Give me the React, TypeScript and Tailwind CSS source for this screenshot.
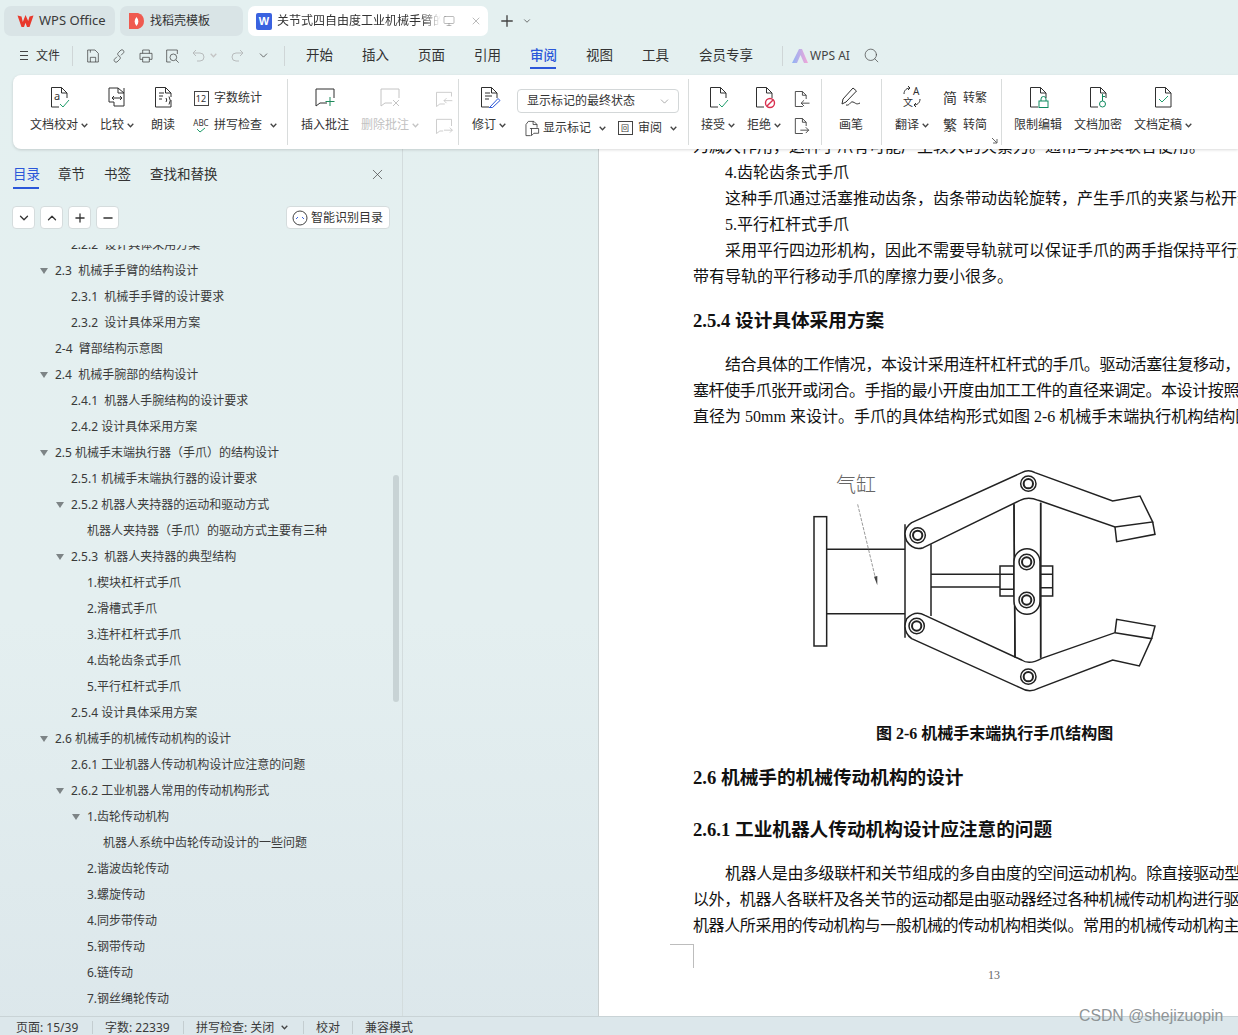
import React from "react";
import { X, Plus, ChevronDown, ChevronUp, Minus, Search, Monitor } from "lucide-react";

const Caret = ({ gray = false }: { gray?: boolean }) => (
  <svg width="7" height="5" viewBox="0 0 7 5" className="ml-[3px] shrink-0" fill="none" stroke={gray ? "#c4c4c4" : "#444"} strokeWidth="1.3">
    <path d="M.7 .8 3.5 3.8 6.3 .8" />
  </svg>
);

const Ic = ({ children, s = 24, vb = 24 }: { children: React.ReactNode; s?: number; vb?: number }) => (
  <svg width={s} height={s} viewBox={`0 0 ${vb} ${vb}`} fill="none" stroke="#2f2f2f" strokeWidth="1" className="shrink-0">
    {children}
  </svg>
);

const Doc = ({ children, open = false }: { children?: React.ReactNode; open?: boolean }) => (
  <Ic>
    <path d={open ? "M12 22H4.500V2.500H14.500L20 8V13" : "M20 15V22H4.500V2.500H14.500L20 8V12"} />
    <path d="M14.500 2.500V8H20" />
    {children}
  </Ic>
);

const Big = ({ label, w, icon, caret, gray }: { label: string; w: number; icon: React.ReactNode; caret?: boolean; gray?: boolean }) => (
  <div className="flex flex-col items-center shrink-0" style={{ width: w }}>
    <div className="h-[24px] flex items-center justify-center">{icon}</div>
    <div className={`mt-[7px] h-[18px] flex items-center text-[12px] whitespace-nowrap ${gray ? "text-[#c2c2c2]" : "text-[#333]"}`}>
      {label}
      {caret && <Caret gray={gray} />}
    </div>
  </div>
);

const Small = ({ icon, label, caret, gap = 5 }: { icon: React.ReactNode; label: string; caret?: boolean; gap?: number }) => (
  <div className="h-[18px] flex items-center text-[12px] text-[#333] whitespace-nowrap">
    <span className="w-[16px] h-[18px] flex items-center justify-center">{icon}</span>
    <span style={{ marginLeft: gap }}>{label}</span>
    {caret && <span className="ml-[5px]"><Caret /></span>}
  </div>
);

const Group = ({ w, children, cls = "" }: { w: number; children: React.ReactNode; cls?: string }) => (
  <div className="h-[66px] flex shrink-0 border-r border-[#d9dcdc]" style={{ width: w }}>
    <div className={`flex h-full pt-[6px] ${cls}`}>{children}</div>
  </div>
);

const MiniDoc = ({ dir }: { dir: "l" | "r" }) => (
  <Ic s={20}>
    <path d="M13 21H4V3H12.500L17 7.500V12" />
    <path d="M12.500 3V7.500H17" />
    {dir === "l" ? <path d="M21 17H11M14.500 13.500 11 17l3.500 3.500" /> : <path d="M10 17H20M16.500 13.500 20 17l-3.500 3.500" />}
  </Ic>
);

const Comment = ({ gray, children }: { gray?: boolean; children?: React.ReactNode }) => (
  <svg width="24" height="24" viewBox="0 0 24 24" fill="none" stroke={gray ? "#c4c4c4" : "#2f2f2f"} strokeWidth="1" className="shrink-0">
    <path d="M14 18H7L3 21V4H21V13" />
    {children}
  </svg>
);

const tree: [number, string, boolean][] = [
  [2, "2.2.2  设计具体采用方案", false],
  [1, "2.3  机械手手臂的结构设计", true],
  [2, "2.3.1  机械手手臂的设计要求", false],
  [2, "2.3.2  设计具体采用方案", false],
  [1, "2-4  臂部结构示意图", false],
  [1, "2.4  机械手腕部的结构设计", true],
  [2, "2.4.1  机器人手腕结构的设计要求", false],
  [2, "2.4.2 设计具体采用方案", false],
  [1, "2.5 机械手末端执行器（手爪）的结构设计", true],
  [2, "2.5.1 机械手末端执行器的设计要求", false],
  [2, "2.5.2 机器人夹持器的运动和驱动方式", true],
  [3, "机器人夹持器（手爪）的驱动方式主要有三种", false],
  [2, "2.5.3  机器人夹持器的典型结构", true],
  [3, "1.楔块杠杆式手爪", false],
  [3, "2.滑槽式手爪", false],
  [3, "3.连杆杠杆式手爪", false],
  [3, "4.齿轮齿条式手爪", false],
  [3, "5.平行杠杆式手爪", false],
  [2, "2.5.4 设计具体采用方案", false],
  [1, "2.6 机械手的机械传动机构的设计", true],
  [2, "2.6.1 工业机器人传动机构设计应注意的问题", false],
  [2, "2.6.2 工业机器人常用的传动机构形式", true],
  [3, "1.齿轮传动机构", true],
  [4, "机器人系统中齿轮传动设计的一些问题", false],
  [3, "2.谐波齿轮传动", false],
  [3, "3.螺旋传动", false],
  [3, "4.同步带传动", false],
  [3, "5.钢带传动", false],
  [3, "6.链传动", false],
  [3, "7.钢丝绳轮传动", false],
];

const SqBtn = ({ children }: { children: React.ReactNode }) => (
  <div className="w-[23px] h-[23px] bg-white border border-[#d5dcdd] rounded-[4px] flex items-center justify-center text-[#333]">{children}</div>
);

const P = ({ children, indent, tight }: { children: React.ReactNode; indent?: boolean; tight?: boolean }) => (
  <div className={`h-[26px] leading-[26px] text-[16px] text-[#111] whitespace-pre ${indent ? "pl-[32px]" : ""} ${tight ? "tracking-[-0.4px]" : ""}`}>{children}</div>
);

const H = ({ children, mt }: { children: React.ReactNode; mt: string }) => (
  <div className={`h-[26px] leading-[26px] text-[18.67px] font-bold text-[#111] whitespace-pre ${mt}`}>{children}</div>
);

const Gripper = () => (
  <svg width="380" height="245" viewBox="0 0 1140 735" fill="none" stroke="#222" strokeWidth="4.5" className="block">
    <rect x="72" y="182" width="38" height="388" />
    <path d="M110 280H345M110 473H345" />
    <text x="138" y="108" fontSize="60" fill="#666" stroke="none" fontFamily="'Noto Sans CJK SC',sans-serif" fontWeight="300">气缸</text>
    <path d="M203 145 256 365" stroke="#666" strokeWidth="2" strokeDasharray="10 4" />
    <path d="M252 362 262 360 262 388Z" fill="#444" stroke="none" />
    <path d="M345 205V545M423 265V480" />
    <path d="M423 355H630M423 393H630" />
    <path d="M672 145 675 605M752 140V605" />
    <rect x="630" y="330" width="42" height="90" />
    <path d="M630 355H672M630 400H672" />
    <rect x="750" y="330" width="38" height="90" />
    <path d="M750 355H788M750 395H788" />
    <path d="M365 200 695 50Q715 38 735 50L968 135 1050 120 1088 198 975 213 745 133Q715 120 690 133L400 275Q370 285 350 255 335 220 365 200Z" fill="#fff" />
    <path d="M1088 198 1095 235 980 257 975 213" />
    <path d="M365 548 690 695Q718 712 745 697L968 612 1048 630 1085 548 975 530 755 607Q718 628 695 612L405 478Q375 462 350 488 335 525 365 548Z" fill="#fff" />
    <path d="M1085 548 1095 510 980 490 975 530" />
    <path d="M672 145 675 605M752 140V605" />
    <rect x="672" y="278" width="78" height="197" rx="39" fill="#fff" />
    {[[710, 318], [710, 432], [383, 238], [380, 510], [715, 83], [715, 662]].map(([x, y]) => (
      <g key={`${x}-${y}`}>
        <circle cx={x} cy={y} r="23" fill="#fff" />
        <circle cx={x} cy={y} r="14" strokeWidth="6" />
      </g>
    ))}
  </svg>
);

export default function App() {
  return (
    <div className="relative w-[1238px] h-[1035px] overflow-hidden flex flex-col bg-[linear-gradient(180deg,#e4f0f0_0%,#e4eff0_60%,#dce7eb_100%)] font-['Noto_Sans','Noto_Sans_CJK_SC',sans-serif] text-[#333]">
      {/* tab bar */}
      <div className="h-[30px] mt-[6px] pl-[4px] flex items-stretch shrink-0">
        <div className="w-[111px] rounded-[7px] bg-[#d9e4e6] flex items-center pl-[13px]">
          <svg width="17" height="14" viewBox="0 0 17 14"><path d="M.5 1.500 4.500 13H7L8.500 8.800 10 13h2.500l4-11.500-4 .9-1.300 4.600L8.500 1 5.800 8 4.500 2.400Z" fill="#e8392c" /></svg>
          <span className="ml-[5px] text-[13px] text-[#3a3a3a]">WPS Office</span>
        </div>
        <div className="ml-[5px] w-[123px] rounded-[7px] bg-[#d9e4e6] flex items-center pl-[9px]">
          <svg width="15" height="16" viewBox="0 0 15 16"><path d="M0 0H9Q15 2 15 8T9 16H0Z" fill="#ef5a50" /><path d="M7.500 4C5 7 5 10 7.500 13 10 10 10 7 7.500 4Z" fill="#fff" /></svg>
          <span className="ml-[6px] text-[12px] text-[#333]">找稻壳模板</span>
        </div>
        <div className="ml-[5px] w-[240px] rounded-[7px] bg-white flex items-center pl-[8px]">
          <div className="w-[16px] h-[17px] rounded-[2px] bg-[#3a62e0] flex items-center justify-center text-white text-[11px] font-bold font-['Liberation_Sans']">W</div>
          <span className="ml-[5px] w-[164px] overflow-hidden whitespace-nowrap text-[12px] text-[#333] [mask-image:linear-gradient(90deg,#000_88%,transparent)]">关节式四自由度工业机械手臂的设计</span>
          <Monitor size={12} strokeWidth={1} className="ml-[2px] text-[#777]" />
          <X size={12} strokeWidth={1} className="ml-[15px] text-[#777]" />
        </div>
        <Plus size={18} strokeWidth={1.8} className="ml-[10px] self-center text-[#444]" />
        <ChevronDown size={10} strokeWidth={1.8} className="ml-[6px] self-center text-[#444]" />
      </div>

      {/* menu row */}
      <div className="h-[39px] flex items-center shrink-0 text-[13.5px] text-[#333]">
        <div className="ml-[20px] w-[8px] flex flex-col gap-[3px]"><i className="block h-px w-full bg-[#444]" /><i className="block h-px w-full bg-[#444]" /><i className="block h-px w-full bg-[#444]" /></div>
        <span className="ml-[8px] text-[12px]">文件</span>
        <i className="ml-[12px] w-px h-[20px] bg-[#cfd6d7]" />
        <span className="ml-[12px]"><Ic s={16}><path d="M4 3H15L20 8V21H4ZM8 21V14H16V21M8 3V7" /></Ic></span>
        <span className="ml-[10px]"><Ic s={16}><path d="M9 13 5 17a3 3 0 0 0 4 4l4-4a3 3 0 0 0-1-5M15 11l4-4a3 3 0 0 0-4-4l-4 4a3 3 0 0 0 1 5" /></Ic></span>
        <span className="ml-[11px]"><Ic s={16}><path d="M7 8V3H17V8M7 17H3V8H21V17H17M7 14H17V21H7Z" /></Ic></span>
        <span className="ml-[10px]"><Ic s={16}><path d="M20 9V3H4V21H10" /><circle cx="14" cy="14" r="5" /><path d="M18 18 22 22" /></Ic></span>
        <span className="ml-[12px]"><svg width="14" height="16" viewBox="0 0 14 16" fill="none" stroke="#b8bcbd"><path d="M4 2 1 5 4 8M1 5H8A4 4 0 0 1 8 13H5" /></svg></span>
        <span className="ml-[1px]"><Caret gray /></span>
        <span className="ml-[13px]"><svg width="14" height="16" viewBox="0 0 14 16" fill="none" stroke="#b8bcbd"><path d="M10 2 13 5 10 8M13 5H6A4 4 0 0 0 6 13H9" /></svg></span>
        <ChevronDown size={13} strokeWidth={1.4} className="ml-[13px] text-[#444]" />
        <i className="ml-[14px] w-px h-[20px] bg-[#cfd6d7]" />
        <div className="ml-[21px] flex w-[482px] items-center">
          {["开始", "插入", "页面", "引用", "审阅", "视图", "工具"].map((m) => (
            <span key={m} className={`relative w-[56px] ${m === "审阅" ? "text-[#2b57d9] font-medium" : ""}`}>
              {m}
              {m === "审阅" && <i className="absolute left-0 w-[26px] top-[22px] h-[2px] bg-[#2b57d9]" />}
            </span>
          ))}
          <span className="ml-[1px] whitespace-nowrap">会员专享</span>
        </div>
        <i className="ml-[-6px] w-px h-[20px] bg-[#cfd6d7]" />
        <svg width="16" height="14" viewBox="0 0 16 14" className="ml-[9px]"><defs><linearGradient id="ai" x1="0" x2="1"><stop offset="0" stopColor="#8fb4f5" /><stop offset="1" stopColor="#f3a6d8" /></linearGradient></defs><path d="M0 14 7 0H10L16 14H12L8.500 6 5 14Z" fill="url(#ai)" /></svg>
        <span className="ml-[2px] text-[12px] text-[#444]">WPS AI</span>
        <Search size={17} strokeWidth={1} className="ml-[13px] text-[#444]" />
      </div>

      {/* ribbon */}
      <div className="h-[74px] ml-[13px] shrink-0 bg-white rounded-l-[8px] flex items-center shadow-[0_1px_3px_rgba(0,0,0,0.15)] relative z-10">
        <Group w={275} cls="pl-[17px]">
          <Big label="文档校对" w={58} caret icon={<Doc open><text x="7" y="15" fontSize="11" fill="#333" stroke="none">a</text><path d="M13 19 16 22 22 15" stroke="#1f9d6b" /></Doc>} />
          <div className="w-[12px]" />
          <Big label="比较" w={34} caret icon={<Ic><path d="M4 3H13L19 8V3M19 8V21H10M4 3V17H9V21H10" /><path d="M13 3V8H19" /><path d="M7 13H17M9 11 7 13 9 15M15 11 17 13 15 15" /></Ic>} />
          <div className="w-[17px]" />
          <Big label="朗读" w={24} icon={<Doc><path d="M8 8H13M8 11H12M8 14H11" /><path d="M15 13q1.500 2 0 4M18 11.500q2.500 4 0 8" /></Doc>} />
          <div className="w-[18px]" />
          <div className="flex flex-col gap-[9px] pt-[4px]">
            <Small icon={<span className="w-[15px] h-[15px] border border-[#444] text-[9px] leading-[13px] text-center text-[#333]">12</span>} label="字数统计" />
            <Small icon={<span className="text-[8px] leading-[9px] text-center text-[#333]">ABC<svg width="12" height="6" viewBox="0 0 12 6" fill="none" stroke="#1f9d6b" className="mx-auto"><path d="M2 2 5 5 10 1" /></svg></span>} label="拼写检查" caret />
          </div>
        </Group>
        <Group w={171} cls="pl-[13px]">
          <Big label="插入批注" w={48} icon={<Comment><path d="M17 12V21M12.500 16.500H21.500" stroke="#1f8a5c" /></Comment>} />
          <div className="w-[12px]" />
          <Big label="删除批注" w={58} caret gray icon={<Comment gray><path d="M15 15 21 21M21 15 15 21" /></Comment>} />
          <div className="w-[15px]" />
          <div className="flex flex-col gap-[7px] pt-[4px]">
            <svg width="20" height="20" viewBox="0 0 24 24" fill="none" stroke="#c4c4c4"><path d="M13 18H7L3 21V4H21V9M22 14H12M15 11 12 14 15 17" /></svg>
            <svg width="20" height="20" viewBox="0 0 24 24" fill="none" stroke="#c4c4c4"><path d="M11 18H7L3 21V4H21V12M12 17H22M19 14 22 17 19 20" /></svg>
          </div>
        </Group>
        <Group w={230} cls="pl-[13px]">
          <Big label="修订" w={34} caret icon={<Doc open><path d="M8 8H13M8 11H15M8 14H12" /><path d="M13 22 21 13.500 23 15.500 15.500 22.500H12" stroke="#2b57d9" /></Doc>} />
          <div className="ml-[11px] w-[162px] mt-[4px]">
            <div className="h-[24px] border border-[#d3d7d8] rounded-[4px] flex items-center justify-between pl-[9px] pr-[7px] text-[12px]">
              显示标记的最终状态
              <ChevronDown size={13} strokeWidth={1} className="text-[#666]" />
            </div>
            <div className="mt-[6px] flex items-center pl-[6px]">
              <Small gap={4} icon={<Ic s={19}><path d="M8 3H15L19 7V11M14 3V7H19M5 7 8 3M5 7V21H11M10 12H21V18H15L12 21V12" /></Ic>} label="显示标记" caret />
              <span className="ml-[11px]"><Small gap={5} icon={<span className="block w-[15px] h-[14px] border border-[#444] text-[8px] leading-[12px] text-center">回</span>} label="审阅" caret /></span>
            </div>
          </div>
        </Group>
        <Group w={133} cls="pl-[12px]">
          <Big label="接受" w={34} caret icon={<Doc open><path d="M13 19 16 22 22 15" stroke="#1f9d6b" /></Doc>} />
          <div className="w-[12px]" />
          <Big label="拒绝" w={34} caret icon={<Doc open><circle cx="18" cy="18" r="4.500" stroke="#d9304f" strokeWidth="1.400" /><path d="M15 21 21 15" stroke="#d9304f" strokeWidth="1.400" /></Doc>} />
          <div className="w-[11px]" />
          <div className="flex flex-col gap-[7px] pt-[4px]"><MiniDoc dir="l" /><MiniDoc dir="r" /></div>
        </Group>
        <Group w={60} cls="pl-[17px]">
          <Big label="画笔" w={24} icon={<Ic><path d="M3 19 4 14 14 3 17.500 6 7 17ZM7 20C11 21 11 16 14 17S17 20 21 18" /></Ic>} />
        </Group>
        <Group w={120} cls="pl-[13px]">
          <Big label="翻译" w={34} caret icon={<Ic><text x="13" y="10" fontSize="10" fill="#333" stroke="none">A</text><text x="3" y="21" fontSize="10" fill="#333" stroke="none">文</text><path d="M4 9C4 5 7 3 10 3M8 1 10 3 8 5M20 14C20 18 17 20 14 20M16 18 14 20 16 22" /></Ic>} />
          <div className="w-[13px]" />
          <div className="flex flex-col gap-[9px] pt-[4px]">
            <Small icon={<span className="text-[14px] leading-none">简</span>} label="转繁" />
            <Small icon={<span className="text-[14px] leading-none">繁</span>} label="转简" />
          </div>
        </Group>
        <div className="h-[66px] flex pt-[6px] pl-[12px] relative">
          <Big label="限制编辑" w={48} icon={<Doc open><rect x="13" y="16" width="9" height="6.500" stroke="#0f8a5f" /><path d="M15 16v-2a2.500 2.500 0 0 1 5 0v2" stroke="#0f8a5f" /></Doc>} />
          <div className="w-[12px]" />
          <Big label="文档加密" w={48} icon={<Doc open><circle cx="16.500" cy="19" r="3" stroke="#0f8a5f" /><path d="M16.500 16V9M16.500 11.500H19" stroke="#0f8a5f" /></Doc>} />
          <div className="w-[12px]" />
          <Big label="文档定稿" w={58} caret icon={<Ic><path d="M4.500 2.500H14.500L20 8V22H4.500Z" /><path d="M14.500 2.500V8H20" /><path d="M8 14 11 17 17 11" stroke="#1f9d6b" /></Ic>} />
          <svg width="7" height="7" viewBox="0 0 7 7" fill="none" stroke="#666" className="absolute -left-[11px] bottom-[1px]"><path d="M1 1 6 6M6 2V6H2" /></svg>
        </div>
      </div>

      {/* main */}
      <div className="flex-1 flex min-h-0">
        <aside className="relative w-[403px] shrink-0 border-r border-[#d3dcdd] flex flex-col">
          <div className="h-[40px] mt-[5px] flex pl-[13px] items-center text-[13.5px] shrink-0">
            <span className="relative text-[#2b57d9] w-[45px]">目录<i className="absolute left-0 top-[23px] w-[26px] h-[2px] bg-[#2b57d9]" /></span>
            <span className="w-[46px]">章节</span>
            <span className="w-[46px]">书签</span>
            <span>查找和替换</span>
            <X size={17} strokeWidth={1} className="ml-auto mr-[16px] text-[#444]" />
          </div>
          <div className="h-[23px] mt-[12px] flex items-center pl-[12px] pr-[12px] shrink-0">
            <div className="flex gap-[5px]">
              <SqBtn><ChevronDown size={14} strokeWidth={2.2} /></SqBtn>
              <SqBtn><ChevronUp size={14} strokeWidth={2.2} /></SqBtn>
              <SqBtn><Plus size={14} strokeWidth={2.2} /></SqBtn>
              <SqBtn><Minus size={14} strokeWidth={2.2} /></SqBtn>
            </div>
            <div className="ml-auto w-[104px] h-[23px] bg-white border border-[#d5dcdd] rounded-[4px] flex items-center pl-[5px] text-[12px] text-[#333]">
              <svg width="16" height="16" viewBox="0 0 16 16" fill="none"><circle cx="8" cy="8" r="7" stroke="#444" /><path d="M4 9 6 7M10 7 12 9" stroke="#3a62e0" /></svg>
              <span className="ml-[3px]">智能识别目录</span>
            </div>
          </div>
          <div className="mt-[16px] flex-1 min-h-0 overflow-hidden text-[12px] text-[#3a3a3a]">
            <div className="-mt-[13px]">
              {tree.map(([lvl, text, tri], i) => (
                <div key={i} className="h-[26px] leading-[26px] whitespace-pre relative" style={{ paddingLeft: 39 + lvl * 16 }}>
                  {tri && <i className="absolute top-[10px] border-x-[4px] border-x-transparent border-t-[6px] border-t-[#7d8486]" style={{ left: 24 + lvl * 16 }} />}
                  {text}
                </div>
              ))}
            </div>
          </div>
          <div className="absolute left-[393px] top-[326px] w-[6px] h-[227px] rounded-full bg-[#c8d3d5]" />
        </aside>
        <div className="w-[195px] shrink-0" />
        <main className="flex-1 min-w-0 bg-white border-l border-[#c9cfd0] overflow-hidden font-['Liberation_Serif','Noto_Sans_CJK_SC',serif]">
          <div className="-mt-[15px] pl-[94px] w-[700px]">
            <P>为减大作用，这种手爪有可能产生较大的夹紧力。通常与弹簧联合使用。</P>
            <P indent>4.齿轮齿条式手爪</P>
            <P indent>这种手爪通过活塞推动齿条，齿条带动齿轮旋转，产生手爪的夹紧与松开动作。</P>
            <P indent>5.平行杠杆式手爪</P>
            <P indent>采用平行四边形机构，因此不需要导轨就可以保证手爪的两手指保持平行运动，</P>
            <P>带有导轨的平行移动手爪的摩擦力要小很多。</P>
            <H mt="mt-[18px]">2.5.4 设计具体采用方案</H>
            <div className="mt-[18px]">
              <P indent tight>结合具体的工作情况，本设计采用连杆杠杆式的手爪。驱动活塞往复移动，通过活</P>
              <P tight>塞杆使手爪张开或闭合。手指的最小开度由加工工件的直径来调定。本设计按照工件</P>
              <P>直径为 50mm 来设计。手爪的具体结构形式如图 2-6 机械手末端执行机构结构图</P>
            </div>
            <div className="mt-[26px] ml-[97px]"><Gripper /></div>
            <div className="mt-[20px] h-[26px] leading-[26px] text-[16px] font-bold text-[#111] pl-[183px] whitespace-pre">图 2-6 机械手末端执行手爪结构图</div>
            <H mt="mt-[18px]">2.6 机械手的机械传动机构的设计</H>
            <H mt="mt-[26px]">2.6.1 工业机器人传动机构设计应注意的问题</H>
            <div className="mt-[18px]">
              <P indent tight>机器人是由多级联杆和关节组成的多自由度的空间运动机构。除直接驱动型机器人</P>
              <P tight>以外，机器人各联杆及各关节的运动都是由驱动器经过各种机械传动机构进行驱动</P>
              <P tight>机器人所采用的传动机构与一般机械的传动机构相类似。常用的机械传动机构主要</P>
            </div>
            <div className="mt-[5px] -ml-[23px] w-[24px] h-[24px] border-t border-r border-[#bdbdbd]" />
            <div className="ml-[295px] h-[12px] text-[12px] leading-[14px] text-[#666]">13</div>
          </div>
        </main>
      </div>

      {/* status bar */}
      <div className="h-[19px] shrink-0 border-t border-[#c9d3d6] bg-[#dce7eb] flex items-center text-[12px] text-[#3a3a3a] pl-[16px] pt-[3px]">
        <span className="w-[76px]">页面: 15/39</span>
        <i className="w-px h-[13px] bg-[#c4cdd0]" />
        <span className="ml-[12px] w-[78px]">字数: 22339</span>
        <i className="w-px h-[13px] bg-[#c4cdd0]" />
        <span className="ml-[12px] flex items-center w-[107px]">拼写检查: 关闭<span className="ml-[4px]"><Caret /></span></span>
        <i className="w-px h-[13px] bg-[#c4cdd0]" />
        <span className="ml-[12px] w-[36px]">校对</span>
        <i className="w-px h-[13px] bg-[#c4cdd0]" />
        <span className="ml-[12px]">兼容模式</span>
      </div>

      <div className="absolute left-[1079px] top-[1006px] text-[15.8px] leading-[20px] text-[#8f9597] font-['Liberation_Sans',sans-serif] whitespace-nowrap">CSDN @shejizuopin</div>
    </div>
  );
}
